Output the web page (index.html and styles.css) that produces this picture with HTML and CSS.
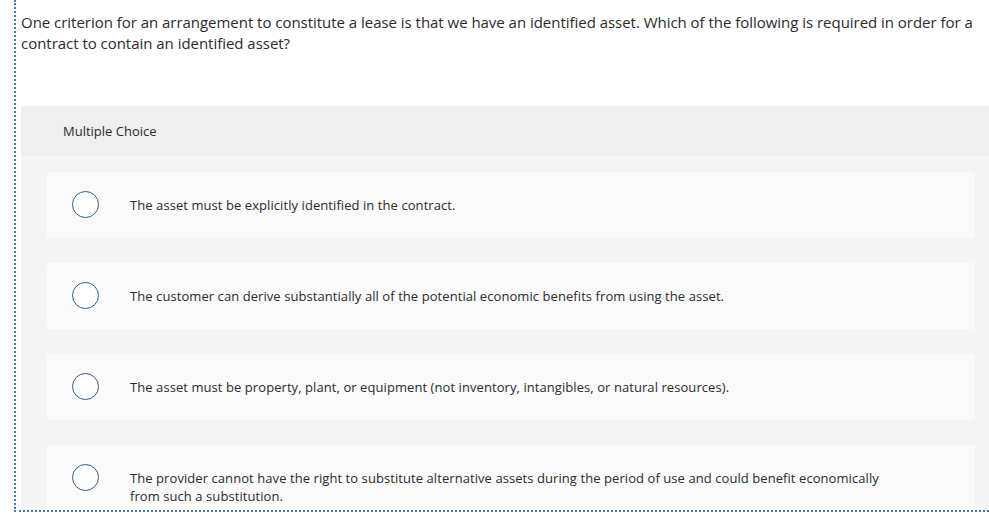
FILE: index.html
```html
<!DOCTYPE html>
<html>
<head>
<meta charset="utf-8">
<link rel="stylesheet" href="styles.css">
</head>
<body>
<div class="frame">
  <p class="question">One criterion for an arrangement to constitute a lease is that we have an identified asset. Which of the following is required in order for a contract to contain an identified asset?</p>
  <section class="mc">
    <div class="mc-head">Multiple Choice</div>
    <div class="mc-body">
      <div class="option"><span class="radio"></span><span class="opt-text">The asset must be explicitly identified in the contract.</span></div>
      <div class="option"><span class="radio"></span><span class="opt-text">The customer can derive substantially all of the potential economic benefits from using the asset.</span></div>
      <div class="option"><span class="radio"></span><span class="opt-text">The asset must be property, plant, or equipment (not inventory, intangibles, or natural resources).</span></div>
      <div class="option"><span class="radio"></span><span class="opt-text">The provider cannot have the right to substitute alternative assets during the period of use and could benefit economically<br>from such a substitution.</span></div>
    </div>
  </section>
</div>
</body>
</html>
```
FILE: styles.css
```css
html, body {
  margin: 0;
  padding: 0;
  background: #ffffff;
}
body {
  font-family: "Open Sans", sans-serif;
  color: #222222;
}
.frame {
  margin-left: 14px;
  height: 510px;
  border-left: 2px dotted #3a78c0;
  border-bottom: 2px dotted #3a78c0;
  padding-left: 5px;
  overflow: hidden;
}
.question {
  margin: 0;
  padding-top: 12px;
  font-size: 15px;
  line-height: 21px;
  letter-spacing: -0.03px;
  color: #2b2b2b;
  padding-right: 10px;
}
.mc {
  margin-top: 52px;
  background: #f4f4f4;
}
.mc-head {
  height: 50px;
  display: flex;
  align-items: center;
  padding-left: 42px;
  background: #efefef;
  font-size: 13px;
  color: #2b2b2b;
}
.mc-body {
  padding: 16px 14px 20px 26px;
  display: flex;
  flex-direction: column;
  gap: 25px;
}
.option {
  background: #fafafa;
  border-radius: 3px;
  display: flex;
  align-items: flex-start;
  padding: 19px 20px 19px 25px;
  min-height: 28px;
}
.radio {
  flex: none;
  width: 25px;
  height: 25px;
  border: 1.5px solid #2c5d8c;
  border-radius: 50%;
  background: #ffffff;
}
.opt-text {
  margin-left: 31px;
  padding-top: 5px;
  font-size: 13px;
  line-height: 18px;
  letter-spacing: 0.07px;
  color: #2b2b2b;
}
```
